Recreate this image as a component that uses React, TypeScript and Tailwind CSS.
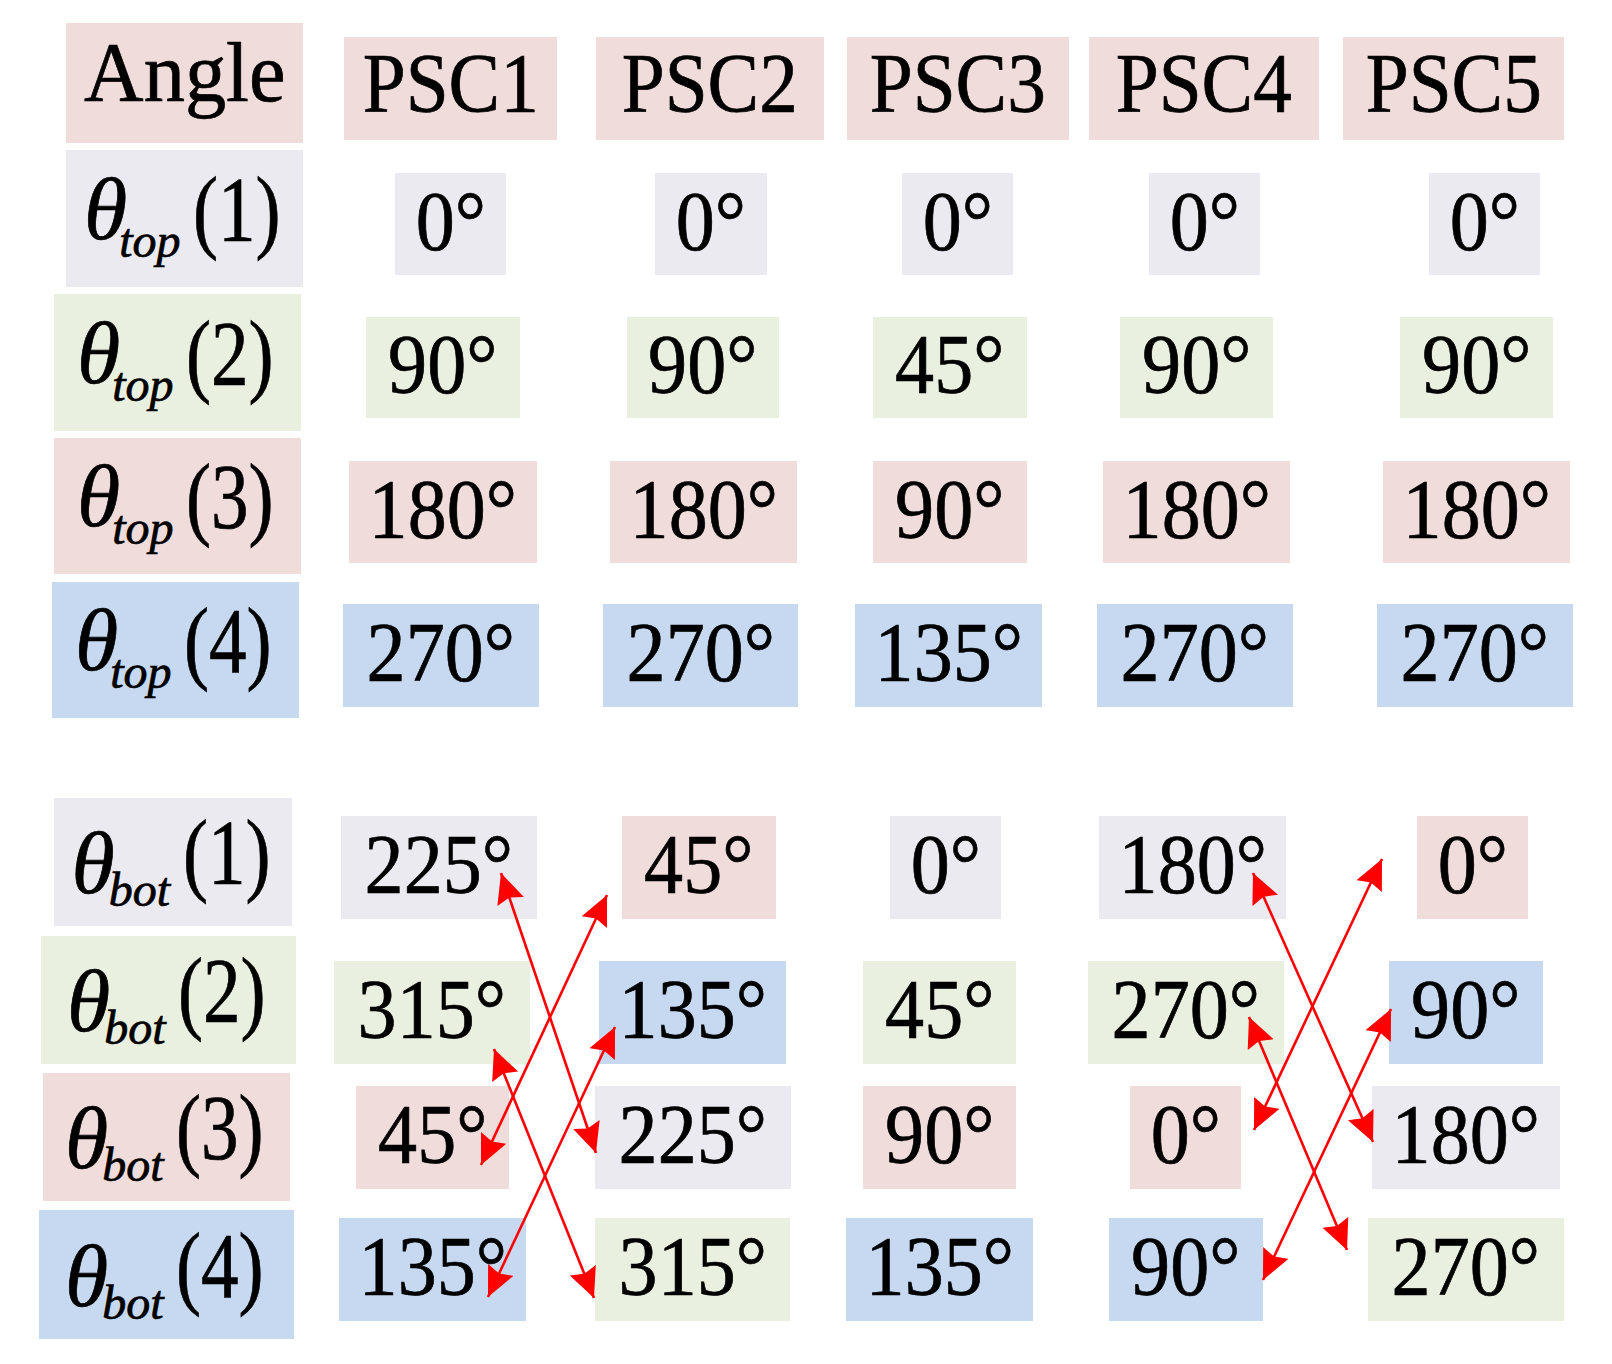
import React from 'react';

const P = 'bg-[#f0dcdb]';
const L = 'bg-[#eceaf1]';
const G = 'bg-[#e9f0e0]';
const B = 'bg-[#c6d9f0]';

type Cell = [string, string, string];

type Row = {
  n: number;
  sub: 'top' | 'bot';
  row: string;
  label: string;
  vals: string;
  h: string;
  cells: Cell[];
};

const headers: [string, string][] = [
  ['PSC1', 'ml-[41px] w-[213px]'],
  ['PSC2', 'ml-[39px] w-[228px]'],
  ['PSC3', 'ml-[23px] w-[222px]'],
  ['PSC4', 'ml-[20px] w-[230px]'],
  ['PSC5', 'ml-[24px] w-[221px]'],
];

const topRows: Row[] = [
  {
    n: 1, sub: 'top', row: 'mt-[7px] h-[137px]', label: `${L} ml-[66px] w-[237px] h-[137px]`,
    vals: 'mt-[23px]', h: 'h-[102px]',
    cells: [
      ['0°', L, 'ml-[92px] w-[111px]'],
      ['0°', L, 'ml-[149px] w-[112px]'],
      ['0°', L, 'ml-[135px] w-[111px]'],
      ['0°', L, 'ml-[136px] w-[111px]'],
      ['0°', L, 'ml-[169px] w-[111px]'],
    ],
  },
  {
    n: 2, sub: 'top', row: 'mt-[7px] h-[137px]', label: `${G} ml-[54px] w-[247px] h-[137px]`,
    vals: 'mt-[23px]', h: 'h-[101px]',
    cells: [
      ['90°', G, 'ml-[65px] w-[154px]'],
      ['90°', G, 'ml-[107px] w-[152px]'],
      ['45°', G, 'ml-[94px] w-[154px]'],
      ['90°', G, 'ml-[93px] w-[153px]'],
      ['90°', G, 'ml-[127px] w-[153px]'],
    ],
  },
  {
    n: 3, sub: 'top', row: 'mt-[7px] h-[136px]', label: `${P} ml-[54px] w-[247px] h-[136px]`,
    vals: 'mt-[23px]', h: 'h-[102px]',
    cells: [
      ['180°', P, 'ml-[48px] w-[188px]'],
      ['180°', P, 'ml-[73px] w-[187px]'],
      ['90°', P, 'ml-[76px] w-[154px]'],
      ['180°', P, 'ml-[76px] w-[187px]'],
      ['180°', P, 'ml-[93px] w-[187px]'],
    ],
  },
  {
    n: 4, sub: 'top', row: 'mt-[8px] h-[136px]', label: `${B} ml-[52px] w-[247px] h-[136px]`,
    vals: 'mt-[22px]', h: 'h-[103px]',
    cells: [
      ['270°', B, 'ml-[44px] w-[196px]'],
      ['270°', B, 'ml-[64px] w-[195px]'],
      ['135°', B, 'ml-[57px] w-[187px]'],
      ['270°', B, 'ml-[55px] w-[196px]'],
      ['270°', B, 'ml-[84px] w-[196px]'],
    ],
  },
];

const botRows: Row[] = [
  {
    n: 1, sub: 'bot', row: 'mt-[80px] h-[128px]', label: `${L} ml-[54px] w-[238px] h-[128px]`,
    vals: 'mt-[18px]', h: 'h-[103px]',
    cells: [
      ['225°', L, 'ml-[49px] w-[196px]'],
      ['45°', P, 'ml-[85px] w-[154px]'],
      ['0°', L, 'ml-[114px] w-[111px]'],
      ['180°', L, 'ml-[98px] w-[187px]'],
      ['0°', P, 'ml-[131px] w-[111px]'],
    ],
  },
  {
    n: 2, sub: 'bot', row: 'mt-[10px] h-[128px]', label: `${G} ml-[41px] w-[255px] h-[128px]`,
    vals: 'mt-[25px]', h: 'h-[103px]',
    cells: [
      ['315°', G, 'ml-[38px] w-[196px]'],
      ['135°', B, 'ml-[69px] w-[187px]'],
      ['45°', G, 'ml-[77px] w-[153px]'],
      ['270°', G, 'ml-[72px] w-[196px]'],
      ['90°', B, 'ml-[105px] w-[154px]'],
    ],
  },
  {
    n: 3, sub: 'bot', row: 'mt-[9px] h-[128px]', label: `${P} ml-[43px] w-[247px] h-[128px]`,
    vals: 'mt-[13px]', h: 'h-[103px]',
    cells: [
      ['45°', P, 'ml-[66px] w-[153px]'],
      ['225°', L, 'ml-[86px] w-[196px]'],
      ['90°', P, 'ml-[72px] w-[153px]'],
      ['0°', P, 'ml-[114px] w-[111px]'],
      ['180°', L, 'ml-[131px] w-[188px]'],
    ],
  },
  {
    n: 4, sub: 'bot', row: 'mt-[9px] h-[129px]', label: `${B} ml-[39px] w-[255px] h-[129px]`,
    vals: 'mt-[8px]', h: 'h-[103px]',
    cells: [
      ['135°', B, 'ml-[45px] w-[187px]'],
      ['315°', G, 'ml-[69px] w-[195px]'],
      ['135°', B, 'ml-[56px] w-[187px]'],
      ['90°', B, 'ml-[76px] w-[154px]'],
      ['270°', G, 'ml-[105px] w-[196px]'],
    ],
  },
];

// double-headed swap arrows between the bottom rows
const arrows: [number, number, number, number][] = [
  [501, 873, 596, 1153],
  [607, 895, 481, 1165],
  [494, 1049, 594, 1298],
  [615, 1027, 488, 1297],
  [1253, 873, 1373, 1142],
  [1382, 859, 1254, 1130],
  [1249, 1017, 1347, 1250],
  [1391, 1009, 1263, 1280],
];

const Label = ({ n, sub, cls }: { n: number; sub: 'top' | 'bot'; cls: string }) => (
  <div className={`${cls} shrink-0 flex items-center justify-center pt-[4px]`}>
    <span className="whitespace-nowrap text-[100px] leading-none">
      <span
        className={
          sub === 'top'
            ? 'italic text-[88px] relative -top-[15px] -ml-[4px]'
            : 'italic text-[88px] relative -top-[4px] -ml-[4px]'
        }
      >
        θ
      </span>
      <span
        className={
          sub === 'top'
            ? 'italic text-[48px] relative top-[3px] -ml-[8px]'
            : 'italic text-[48px] relative top-[9px] -ml-[6px]'
        }
      >
        {sub}
      </span>
      <span className="inline-block relative -top-[13px] text-[94px] scale-x-[0.8] -mr-[11px] ml-[2px]">({n})</span>
    </span>
  </div>
);

const Value = ({ cell, h }: { cell: Cell; h: string }) => (
  <div className={`${cell[2]} ${cell[1]} ${h} shrink-0 flex items-center justify-center pb-[5px]`}>
    <span className="inline-block scale-x-[0.93] text-[84px] leading-none whitespace-nowrap">{cell[0]}</span>
  </div>
);

const RowView = ({ r }: { r: Row }) => (
  <div className={`flex items-start ${r.row}`}>
    <Label n={r.n} sub={r.sub} cls={r.label} />
    <div className={`flex items-start ${r.vals}`}>
      {r.cells.map((c, i) => (
        <Value key={i} cell={c} h={r.h} />
      ))}
    </div>
  </div>
);

const App = () => {
  return (
    <div className="relative w-[1612px] h-[1364px] bg-white overflow-hidden pt-[23px] text-black [-webkit-text-stroke:0.7px_black] font-['Liberation_Serif','Times_New_Roman',serif]">
      {/* Header */}
      <div className="flex items-start">
        <div className={`${P} ml-[66px] w-[237px] h-[120px] shrink-0 flex items-center justify-center pb-[22px]`}>
          <span className="inline-block scale-x-[0.97] text-[85px] leading-none">Angle</span>
        </div>
        <div className="flex items-start mt-[14px]">
          {headers.map(([t, cls]) => (
            <div key={t} className={`${cls} ${P} h-[103px] shrink-0 flex items-center justify-center pb-[9px]`}>
              <span className="inline-block scale-x-[0.92] text-[84px] leading-none">{t}</span>
            </div>
          ))}
        </div>
      </div>

      {/* θ_top rows */}
      {topRows.map((r) => (
        <RowView key={`t${r.n}`} r={r} />
      ))}

      {/* θ_bot rows */}
      {botRows.map((r) => (
        <RowView key={`b${r.n}`} r={r} />
      ))}

      {/* Arrows overlay */}
      <svg className="absolute inset-0 pointer-events-none" width="1612" height="1364" viewBox="0 0 1612 1364">
        <defs>
          <marker
            id="ah"
            markerUnits="userSpaceOnUse"
            markerWidth="32"
            markerHeight="30"
            refX="30"
            refY="14"
            orient="auto-start-reverse"
          >
            <path d="M0,0 L30,14 L0,28 L4,14 Z" fill="#ff0000" />
          </marker>
        </defs>
        {arrows.map(([x1, y1, x2, y2], i) => (
          <line
            key={i}
            x1={x1}
            y1={y1}
            x2={x2}
            y2={y2}
            stroke="#ff0000"
            strokeWidth="2.6"
            markerStart="url(#ah)"
            markerEnd="url(#ah)"
          />
        ))}
      </svg>
    </div>
  );
};

export default App;
